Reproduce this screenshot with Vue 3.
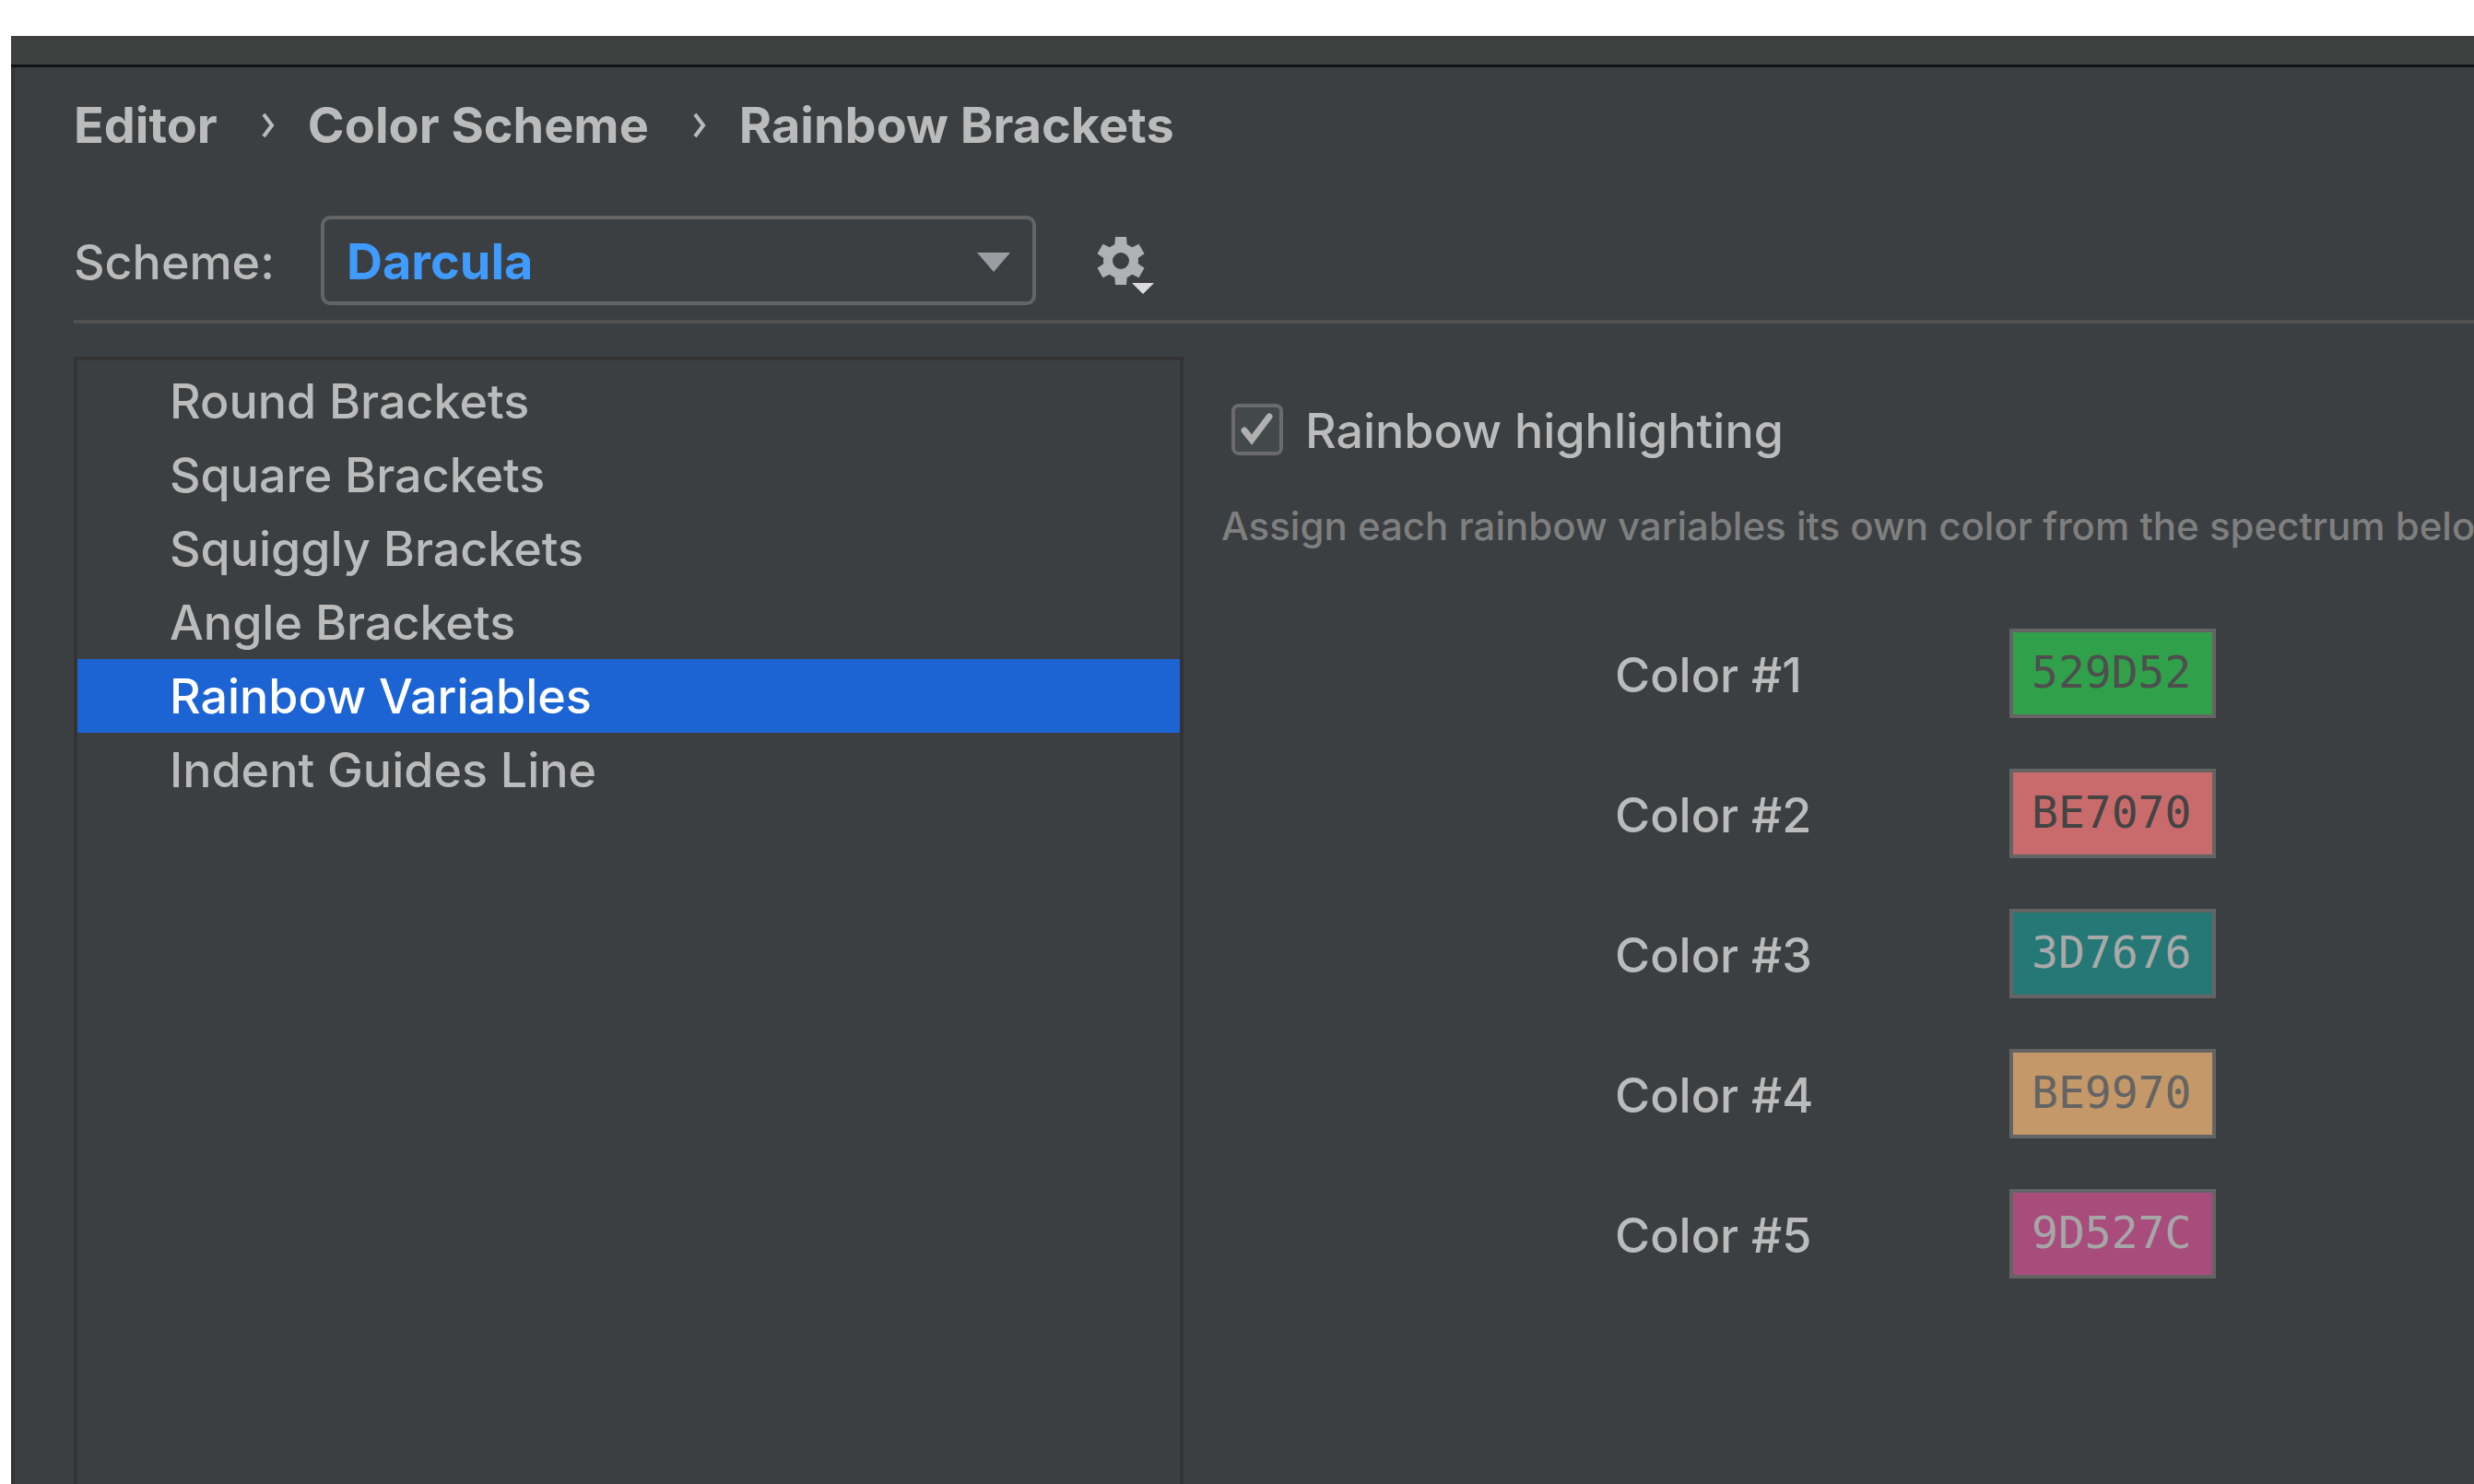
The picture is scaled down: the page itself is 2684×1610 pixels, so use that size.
<script setup>
import { ref } from 'vue'

const crumbs = ['Editor', 'Color Scheme', 'Rainbow Brackets']
const items = [
  'Round Brackets',
  'Square Brackets',
  'Squiggly Brackets',
  'Angle Brackets',
  'Rainbow Variables',
  'Indent Guides Line',
]
const selected = ref('Rainbow Variables')
const scheme = ref('Darcula')
const rainbow = ref(true)
const colors = ref([
  { hex: '529D52', fill: '#30a14a', ink: '#4e4e4e' },
  { hex: 'BE7070', fill: '#c96b6c', ink: '#444444' },
  { hex: '3D7676', fill: '#267877', ink: '#a9a9a9' },
  { hex: 'BE9970', fill: '#c49868', ink: '#646464' },
  { hex: '9D527C', fill: '#a84c7c', ink: '#a6a6a6' },
])
const toothAngles = [0, 60, 120, 180, 240, 300]
</script>

<template>
  <div class="window">
    <div class="titlebar"></div>
    <main class="settings">
      <nav class="crumbs" aria-label="Breadcrumb">
        <template v-for="(crumb, i) in crumbs" :key="crumb">
          <svg v-if="i > 0" class="chevron" viewBox="0 0 14 28" aria-hidden="true">
            <path d="M2 2 L11 14 L2 26" fill="none" stroke="currentColor" stroke-width="4" />
          </svg>
          <a href="#" class="crumb">{{ crumb }}</a>
        </template>
      </nav>

      <div class="scheme">
        <label for="scheme" class="scheme-label">Scheme:</label>
        <div class="select-wrap">
          <select id="scheme" v-model="scheme" class="select">
            <option>Darcula</option>
          </select>
          <svg class="caret" viewBox="0 0 36 21" aria-hidden="true">
            <path d="M0 0 H36 L18 21 Z" fill="#9a9da1" />
          </svg>
        </div>
        <button type="button" class="gear" aria-label="Scheme actions">
          <svg viewBox="0 0 62 64" aria-hidden="true">
            <g transform="translate(25 32)" fill="#afb1b3">
              <circle r="14" fill="none" stroke="#afb1b3" stroke-width="10" />
              <path
                v-for="angle in toothAngles"
                :key="angle"
                d="M-6 -26 H6 L7 -14 H-7 Z"
                :transform="`rotate(${angle})`"
              />
            </g>
            <path d="M37 56 H61 L49 68 Z" fill="#dcdcdc" />
          </svg>
        </button>
      </div>

      <div class="content">
        <ul class="list">
          <li v-for="item in items" :key="item">
            <button
              type="button"
              class="item"
              :class="{ active: item === selected }"
              @click="selected = item"
            >{{ item }}</button>
          </li>
        </ul>

        <section class="details">
          <label class="check">
            <span class="box">
              <input v-model="rainbow" type="checkbox" class="box-input" />
              <svg v-if="rainbow" class="tick" viewBox="0 0 56 56" aria-hidden="true">
                <path
                  d="M14 29 L22 39 L41 14"
                  fill="none"
                  stroke="#b0b0b0"
                  stroke-width="7"
                  stroke-linecap="round"
                />
              </svg>
            </span>
            <span class="check-text">Rainbow highlighting</span>
          </label>
          <p class="hint">Assign each rainbow variables its own color from the spectrum below:</p>
          <div class="colors">
            <div v-for="(color, i) in colors" :key="i" class="color">
              <label :for="`color-${i}`" class="color-label">Color #{{ i + 1 }}</label>
              <input
                :id="`color-${i}`"
                v-model="color.hex"
                type="text"
                class="swatch"
                :style="{ backgroundColor: color.fill, color: color.ink }"
              />
            </div>
          </div>
        </section>
      </div>
    </main>
  </div>
</template>

<style>
body {
  background: #ffffff;
}
</style>

<style scoped>
.window {
  box-sizing: border-box;
  height: 100vh;
  padding: 39px 0 0 12px;
  display: flex;
  flex-direction: column;
  overflow: hidden;
  font-family: Inter, "Liberation Sans", sans-serif;
  font-size: 52px;
  font-weight: 500;
  line-height: 64px;
  color: #bbbbbb;
}

.titlebar {
  flex: none;
  height: 31px;
  background: #3e403f;
  border-bottom: 3px solid #101112;
}

.settings {
  flex: 1;
  min-height: 0;
  display: flex;
  flex-direction: column;
  padding: 31px 0 0 64px;
  background: #3c3f41;
  border-left: 4px solid #343434;
}

.crumbs {
  display: flex;
  align-items: center;
  font-size: 54px;
  font-weight: 700;
}

.crumb {
  color: inherit;
  text-decoration: none;
}

.chevron {
  width: 14px;
  height: 28px;
  margin: 0 36px 0 48px;
}

.scheme {
  display: flex;
  align-items: center;
  padding: 66px 0 16px;
  border-bottom: 4px solid #515151;
}

.scheme-label {
  width: 268px;
  padding-top: 4px;
}

.select-wrap {
  position: relative;
  width: 776px;
}

.select {
  display: block;
  box-sizing: border-box;
  width: 100%;
  height: 97px;
  padding: 2px 100px 0 24px;
  appearance: none;
  background: transparent;
  border: 4px solid #646464;
  border-radius: 10px;
  color: #3f9bff;
  font: inherit;
  font-size: 54px;
  font-weight: 700;
}

.caret {
  position: absolute;
  right: 28px;
  top: 40px;
  width: 36px;
  height: 21px;
  pointer-events: none;
}

.gear {
  width: 62px;
  height: 64px;
  margin-left: 67px;
  padding: 0;
  background: none;
  border: 0;
}

.gear svg {
  display: block;
  width: 62px;
  height: 64px;
  overflow: visible;
}

.content {
  flex: 1;
  min-height: 0;
  display: flex;
  margin-top: 36px;
}

.list {
  box-sizing: border-box;
  flex: none;
  width: 1204px;
  margin: 0;
  padding: 4px 0 0;
  list-style: none;
  border: 4px solid #333333;
  border-bottom: 0;
}

.item {
  display: block;
  box-sizing: border-box;
  width: 100%;
  height: 80px;
  padding: 2px 0 0 100px;
  background: none;
  border: 0;
  color: inherit;
  font: inherit;
  text-align: left;
}

.item.active {
  background: #1c64d4;
  color: #ffffff;
}

.details {
  flex: 1;
  min-width: 0;
  padding: 45px 0 0 41px;
  overflow: hidden;
}

.check {
  display: flex;
  align-items: center;
  gap: 24px;
  margin-left: 11px;
}

.check-text {
  padding-top: 4px;
}

.box {
  position: relative;
  width: 56px;
  height: 56px;
}

.box-input {
  display: block;
  box-sizing: border-box;
  width: 56px;
  height: 56px;
  margin: 0;
  appearance: none;
  background: #43494a;
  border: 4px solid #6b6b6b;
  border-radius: 8px;
}

.tick {
  position: absolute;
  inset: 0;
  pointer-events: none;
}

.hint {
  margin: 39px 0 0;
  font-size: 42px;
  line-height: 64px;
  color: #7f7f7f;
  white-space: nowrap;
}

.colors {
  display: flex;
  flex-direction: column;
  gap: 55px;
  margin: 79px 0 0 427px;
}

.color {
  display: flex;
  align-items: center;
}

.color-label {
  width: 428px;
  padding-top: 4px;
}

.swatch {
  box-sizing: border-box;
  width: 224px;
  height: 97px;
  padding: 0 0 4px 20px;
  border: 4px solid #646464;
  border-radius: 0;
  font-family: "DejaVu Sans Mono", monospace;
  font-size: 48px;
}
</style>
